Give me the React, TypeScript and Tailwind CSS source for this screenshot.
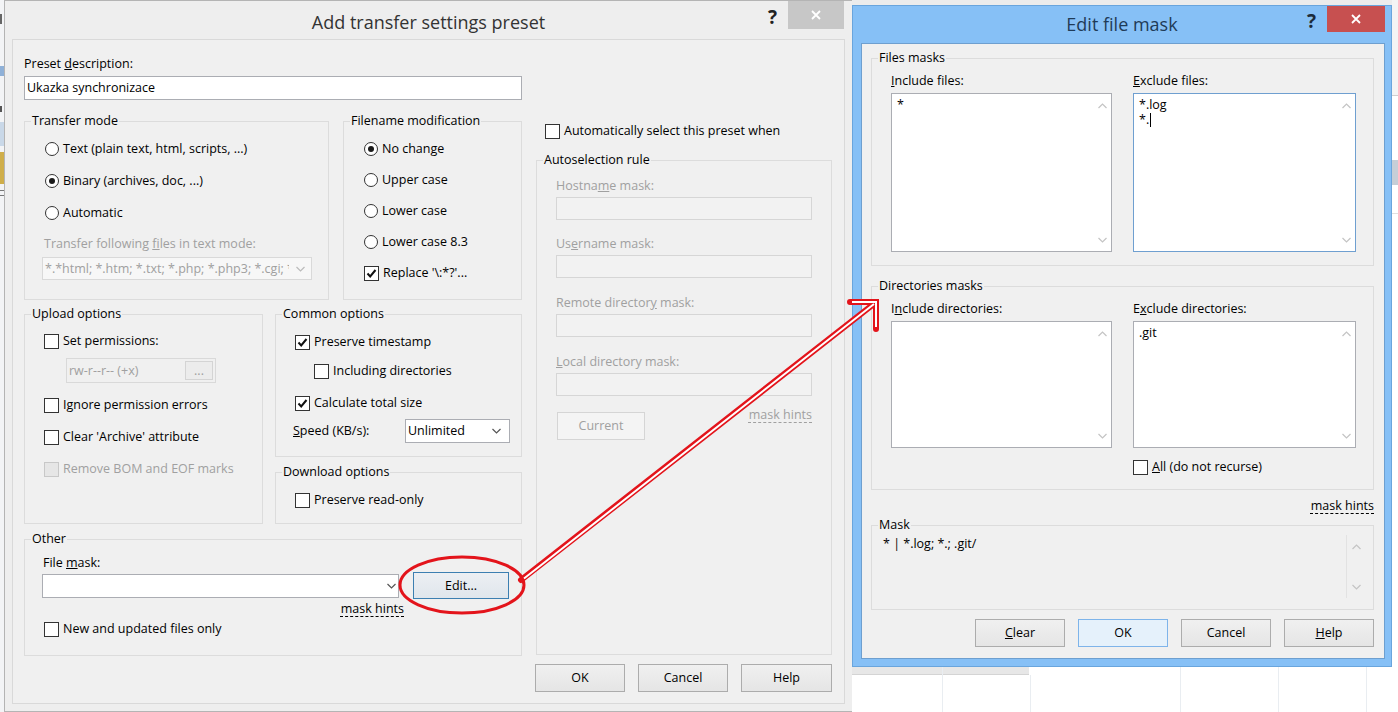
import React from 'react';

const font = "font-['Open_Sans',sans-serif]";

function Chevron({ up = false, color = '#555' }: { up?: boolean; color?: string }) {
  return (
    <svg width="9" height="6" viewBox="0 0 9 6">
      <path d={up ? 'M0.5 5 L4.5 1 L8.5 5' : 'M0.5 1 L4.5 5 L8.5 1'} fill="none" stroke={color} strokeWidth="1.2" />
    </svg>
  );
}

function CloseX() {
  return (
    <svg width="10" height="10" viewBox="0 0 10 10">
      <path d="M1 1 L9 9 M9 1 L1 9" stroke="#fff" strokeWidth="1.8" />
    </svg>
  );
}

function Radio({ checked = false, children, className = '' }: { checked?: boolean; children: React.ReactNode; className?: string }) {
  return (
    <div className={`flex h-[18px] items-center gap-1 ${className}`}>
      <span className="flex h-[14px] w-[14px] shrink-0 items-center justify-center rounded-full border border-[#333] bg-white">
        {checked && <span className="h-[6px] w-[6px] rounded-full bg-[#1a1a1a]" />}
      </span>
      <span>{children}</span>
    </div>
  );
}

function Check({ checked = false, disabled = false, children, className = '' }: { checked?: boolean; disabled?: boolean; children: React.ReactNode; className?: string }) {
  return (
    <div className={`flex h-[18px] items-center gap-1 ${className}`}>
      <span className={`flex h-[15px] w-[15px] shrink-0 items-center justify-center border ${disabled ? 'border-[#c8c8c8] bg-[#e6e6e6]' : 'border-[#333] bg-white'}`}>
        {checked && (
          <svg width="13" height="13" viewBox="0 0 13 13">
            <path d="M2.5 6.5 L5.2 9.5 L10.5 3" fill="none" stroke="#111" strokeWidth="2" />
          </svg>
        )}
      </span>
      <span className={disabled ? 'text-[#a0a0a0]' : ''}>{children}</span>
    </div>
  );
}

function Group({ title, className = '', children }: { title: string; className?: string; children?: React.ReactNode }) {
  return (
    <fieldset className={`border border-[#dcdcdc] ${className}`}>
      <legend className="ml-[6px] px-px leading-4">{title}</legend>
      {children}
    </fieldset>
  );
}

function Combo({ text = '', disabled = false, className = '', arrow = 'w-[16px]' }: { text?: string; disabled?: boolean; className?: string; arrow?: string }) {
  return (
    <div className={`flex items-center border ${disabled ? 'border-[#d9d9d9] bg-[#f7f7f7] text-[#a0a0a0]' : 'border-[#abadb3] bg-white'} ${className}`}>
      <span className="flex-1 overflow-hidden whitespace-nowrap pl-[2px]">{text}</span>
      <span className={`flex h-full shrink-0 items-center justify-center ${arrow}`}>
        <Chevron color={disabled ? '#bbb' : '#555'} />
      </span>
    </div>
  );
}

function Btn({ children, variant = 'normal', className = '' }: { children: React.ReactNode; variant?: 'normal' | 'focus' | 'default' | 'disabled'; className?: string }) {
  const look =
    variant === 'focus'
      ? 'border-[#3c7fb1] bg-linear-to-b from-[#eceff3] to-[#e0e6ec]'
      : variant === 'default'
      ? 'border-[#7eb4ea] bg-[#e5f1fb]'
      : variant === 'disabled'
      ? 'border-[#d5d5d5] bg-[#f4f4f4] text-[#a0a0a0]'
      : 'border-[#acacac] bg-linear-to-b from-[#f0f0f0] to-[#e5e5e5]';
  return (
    <button type="button" className={`flex items-center justify-center border ${look} ${className}`}>
      {children}
    </button>
  );
}

function Hint({ children, className = '' }: { children: React.ReactNode; className?: string }) {
  return <span className={`underline decoration-dashed decoration-1 underline-offset-[3px] ${className}`}>{children}</span>;
}

function Field({ label, className = '' }: { label: React.ReactNode; className?: string }) {
  return (
    <div className={className}>
      <div>{label}</div>
      <div className="mt-[3px] h-[23px] w-[256px] border border-[#d6d6d6] bg-[#f2f2f2]" />
    </div>
  );
}

function Memo({ lines = [], focused = false, caret = false, className = '' }: { lines?: string[]; focused?: boolean; caret?: boolean; className?: string }) {
  return (
    <div className={`flex border bg-white ${focused ? 'border-[#6f9fd0]' : 'border-[#abadb3]'} ${className}`}>
      <div className="flex-1 pl-[5px] pt-[3px] leading-[15px]">
        {lines.map((l, i) => (
          <div key={i}>
            {l}
            {caret && i === lines.length - 1 && <span className="ml-px inline-block h-[14px] w-px bg-black align-[-3px]" />}
          </div>
        ))}
      </div>
      <div className="flex w-[17px] flex-col items-center justify-between pb-[8px] pt-[9px]">
        <Chevron up color="#c4c4c4" />
        <Chevron color="#c4c4c4" />
      </div>
    </div>
  );
}

function Backdrop() {
  return (
    <>
      <div className="absolute left-0 top-0 flex h-full w-[4px] flex-col bg-[#f3f4f6]">
        <div className="mt-[14px] h-[10px] w-[2px] bg-[#666]" />
        <div className="mt-[42px] h-[10px] bg-[#8fb1d8]" />
        <div className="mt-[30px] h-[6px] w-[2px] bg-[#555]" />
        <div className="mt-[10px] h-[24px] bg-[#c9d8e8]" />
        <div className="mt-[6px] h-[32px] bg-[#cfae4a]" />
        <div className="mt-[6px] h-px bg-[#777]" />
        <div className="mt-[4px] h-px bg-[#777]" />
      </div>
      <div className="absolute left-[852px] top-0 h-[5px] w-[546px] bg-[#ececec]" />
      <div className="absolute right-0 top-0 flex h-full w-[6px] flex-col bg-white">
        <div className="h-[95px] bg-[#f4f4f4]" />
        <div className="h-px bg-[#cfcfcf]" />
        <div className="mt-[64px] h-[25px] bg-[#c6ced7]" />
        <div className="mt-[28px] h-px bg-[#e0e0e0]" />
      </div>
      <div className="absolute left-[852px] top-[667px] h-[8px] w-[177px] border-b border-[#d4d4d4] bg-[#e7e7e7]" />
      <div className="absolute left-[942px] top-[667px] h-[45px] w-px bg-[#e9edf1]" />
      <div className="absolute left-[1030px] top-[675px] h-[37px] w-px bg-[#e9edf1]" />
      <div className="absolute left-[1180px] top-[667px] h-[45px] w-px bg-[#e9edf1]" />
      <div className="absolute left-[1278px] top-[667px] h-[45px] w-px bg-[#e9edf1]" />
      <div className="absolute left-[1366px] top-[667px] h-[45px] w-px bg-[#e9edf1]" />
    </>
  );
}

function LeftDialog() {
  return (
    <div className="absolute left-[4px] top-0 flex h-[712px] w-[848px] flex-col border-y border-l border-[#b4b4b4] bg-[#eeeeee]">
      <div className="grid h-[38px] shrink-0 grid-cols-[1fr_auto_1fr]">
        <div />
        <div className="pt-[9px] text-[18px] leading-6 text-[#333]">Add transfer settings preset</div>
        <div className="flex items-start justify-end">
          <span className="mt-[4px] text-[19px] font-bold leading-6 text-[#222]">?</span>
          <div className="ml-[11px] mr-[8px] flex h-[28px] w-[56px] items-center justify-center bg-[#c7c7c7]">
            <CloseX />
          </div>
        </div>
      </div>
      <div className="mx-[7px] flex h-[665px] flex-col border border-[#d9d9d9] bg-[#f0f0f0] pl-[11px] pt-[16px]">
        <div className="flex gap-[14px]">
          {/* left column */}
          <div className="w-[498px]">
            <div>
              Preset <u>d</u>escription:
            </div>
            <div className="mt-[4px] flex h-[24px] items-center border border-[#abadb3] bg-white pl-[2px]">Ukazka synchronizace</div>

            <div className="mt-[13px] flex gap-[14px]">
              <Group title="Transfer mode" className="h-[187px] w-[305px]">
                <div className="pl-[20px] pt-[11px]">
                  <Radio>Text (plain text, html, scripts, ...)</Radio>
                  <Radio checked className="mt-[14px]">Binary (archives, doc, ...)</Radio>
                  <Radio className="mt-[14px]">Automatic</Radio>
                  <div className="-ml-px mt-[14px] text-[#a0a0a0]">
                    Transfer following <u>f</u>iles in text mode:
                  </div>
                  <Combo
                    disabled
                    className="-ml-[3px] mt-[5px] h-[23px] w-[270px]"
                    arrow="w-[22px]"
                    text="*.*html; *.htm; *.txt; *.php; *.php3; *.cgi; *.c; *.cpp"
                  />
                </div>
              </Group>
              <Group title="Filename modification" className="h-[187px] w-[179px]">
                <div className="flex flex-col gap-[13px] pl-[20px] pt-[11px]">
                  <Radio checked>No change</Radio>
                  <Radio>Upper case</Radio>
                  <Radio>Lower case</Radio>
                  <Radio>Lower case 8.3</Radio>
                  <Check checked>Replace '\:*?'...</Check>
                </div>
              </Group>
            </div>

            <div className="mt-[6px] flex gap-[12px]">
              <Group title="Upload options" className="h-[218px] w-[239px]">
                <div className="pl-[19px] pt-[10px]">
                  <Check>Set permissions:</Check>
                  <div className="ml-[22px] mt-[8px] flex h-[25px] w-[150px] items-center justify-between border border-[#d9d9d9] pl-[2px] pr-[2px] text-[#a0a0a0]">
                    <span>rw-r--r-- (+x)</span>
                    <span className="flex h-[19px] w-[28px] items-center justify-center border border-[#d4d4d4] bg-[#ececec] leading-3">...</span>
                  </div>
                  <Check className="mt-[13px]">Ignore permission errors</Check>
                  <Check className="mt-[14px]">Clear 'Archive' attribute</Check>
                  <Check disabled className="mt-[14px]">Remove BOM and EOF marks</Check>
                </div>
              </Group>
              <div className="w-[247px]">
                <Group title="Common options" className="h-[151px]">
                  <div className="pl-[19px] pt-[11px]">
                    <Check checked>Preserve timestamp</Check>
                    <Check className="ml-[19px] mt-[11px]">Including directories</Check>
                    <Check checked className="mt-[14px]">Calculate total size</Check>
                    <div className="-ml-[2px] mt-[7px] flex items-center">
                      <span className="w-[112px]">
                        <u>S</u>peed (KB/s):
                      </span>
                      <Combo className="h-[24px] w-[105px]" arrow="w-[26px]" text="Unlimited" />
                    </div>
                  </div>
                </Group>
                <Group title="Download options" className="mt-[7px] h-[60px]">
                  <div className="pl-[19px] pt-[11px]">
                    <Check>Preserve read-only</Check>
                  </div>
                </Group>
              </div>
            </div>

            <Group title="Other" className="mt-[7px] h-[125px] w-[498px]">
              <div className="pl-[17px] pt-[8px]">
                <div className="pl-px">
                  File <u>m</u>ask:
                </div>
                <div className="mt-px flex items-center gap-[14px]">
                  <Combo className="h-[24px] w-[357px]" arrow="w-[14px]" />
                  <Btn variant="focus" className="h-[27px] w-[96px]">
                    Edit...
                  </Btn>
                </div>
                <div className="mt-[2px] w-[362px] text-right">
                  <Hint>mask hints</Hint>
                </div>
                <Check className="ml-[2px] mt-[3px]">New and updated files only</Check>
              </div>
            </Group>
          </div>

          {/* right column */}
          <div className="w-[296px]">
            <Check className="ml-[9px] mt-[66px]">Automatically select this preset when</Check>
            <Group title="Autoselection rule" className="mt-[12px] h-[503px]">
              <div className="pl-[19px] pr-[19px] pt-[10px] text-[#a0a0a0]">
                <Field
                  label={
                    <>
                      Hostna<u>m</u>e mask:
                    </>
                  }
                />
                <Field
                  className="mt-[16px]"
                  label={
                    <>
                      Us<u>e</u>rname mask:
                    </>
                  }
                />
                <Field
                  className="mt-[17px]"
                  label={
                    <>
                      Remote director<u>y</u> mask:
                    </>
                  }
                />
                <Field
                  className="mt-[17px]"
                  label={
                    <>
                      <u>L</u>ocal directory mask:
                    </>
                  }
                />
                <div className="mt-[16px] flex items-start justify-between">
                  <Btn variant="disabled" className="ml-px h-[28px] w-[88px]">
                    Current
                  </Btn>
                  <Hint className="-mt-[5px]">mask hints</Hint>
                </div>
              </div>
            </Group>
          </div>
        </div>

        <div className="mt-[8px] flex justify-end gap-[13px] pr-[12px]">
          <Btn className="h-[28px] w-[90px]">OK</Btn>
          <Btn className="h-[28px] w-[90px]">Cancel</Btn>
          <Btn className="h-[28px] w-[91px]">Help</Btn>
        </div>
      </div>
    </div>
  );
}

function RightDialog() {
  return (
    <div className="absolute left-[852px] top-[5px] flex h-[662px] w-[540px] flex-col border border-[#69a5dd] bg-[#86c0f6]">
      <div className="grid h-[37px] shrink-0 grid-cols-[1fr_auto_1fr]">
        <div />
        <div className="pt-[6px] text-[18px] leading-6 text-[#1f3b57]">Edit file mask</div>
        <div className="flex items-start justify-end">
          <span className="mt-[3px] text-[19px] font-bold leading-6 text-[#1c2c3c]">?</span>
          <div className="ml-[11px] mr-[6px] flex h-[26px] w-[58px] items-center justify-center bg-[#c75050]">
            <CloseX />
          </div>
        </div>
      </div>
      <div className="ml-[8px] flex h-[616px] w-[524px] flex-col border border-[#6e9fcf] bg-[#f0f0f0] pl-[9px] pr-[10px] pt-[6px]">
        <Group title="Files masks" className="h-[216px] w-[503px]">
          <div className="grid grid-cols-[221px_223px] gap-x-[21px] pl-[19px] pt-[7px]">
            <div>
              <u>I</u>nclude files:
            </div>
            <div>
              <u>E</u>xclude files:
            </div>
            <Memo className="mt-[4px] h-[159px]" lines={['*']} />
            <Memo focused caret className="mt-[4px] h-[159px]" lines={['*.log', '*.']} />
          </div>
        </Group>

        <Group title="Directories masks" className="mt-[12px] h-[212px] w-[503px]">
          <div className="grid grid-cols-[221px_223px] gap-x-[21px] pl-[19px] pt-[7px]">
            <div>
              I<u>n</u>clude directories:
            </div>
            <div>
              E<u>x</u>clude directories:
            </div>
            <Memo className="mt-[4px] h-[127px]" />
            <Memo className="mt-[4px] h-[127px]" lines={['.git']} />
            <div />
            <Check className="mt-[10px]">
              <u>A</u>ll (do not recurse)
            </Check>
          </div>
        </Group>

        <div className="mt-[8px] w-[503px] text-right">
          <Hint>mask hints</Hint>
        </div>

        <Group title="Mask" className="mt-[3px] h-[93px] w-[503px]">
          <div className="flex h-[76px]">
            <div className="flex-1 pl-[11px] pt-[3px]">* | *.log; *.; .git/</div>
            <div className="mr-[7px] mt-[2px] flex h-[63px] w-[20px] flex-col items-center justify-between border-l border-[#e2e2e2] pb-[8px] pt-[9px]">
              <Chevron up color="#c4c4c4" />
              <Chevron color="#c4c4c4" />
            </div>
          </div>
        </Group>

        <div className="mt-[9px] flex justify-end gap-[13px]">
          <Btn className="h-[28px] w-[90px]">
            <span>
              <u>C</u>lear
            </span>
          </Btn>
          <Btn variant="default" className="h-[28px] w-[90px]">
            OK
          </Btn>
          <Btn className="h-[28px] w-[90px]">Cancel</Btn>
          <Btn className="h-[28px] w-[90px]">
            <span>
              <u>H</u>elp
            </span>
          </Btn>
        </div>
      </div>
    </div>
  );
}

function Annotation() {
  const red = '#e3141b';
  return (
    <svg className="pointer-events-none absolute left-0 top-0" width="1398" height="712">
      <ellipse cx="462" cy="585" rx="62" ry="28" fill="none" stroke={red} strokeWidth="3" />
      <path d="M521 580 L875 303 M850 302 L876 302 L876 329" fill="none" stroke={red} strokeWidth="6" strokeLinecap="round" />
      <path d="M524 578.5 L874 304 M852 302 L876 302 L876 327" fill="none" stroke="#fff" strokeWidth="2" />
    </svg>
  );
}

export default function App() {
  return (
    <div className={`relative h-[712px] w-[1398px] overflow-hidden bg-white text-[12.5px] leading-4 text-black ${font}`}>
      <Backdrop />
      <LeftDialog />
      <RightDialog />
      <Annotation />
    </div>
  );
}
